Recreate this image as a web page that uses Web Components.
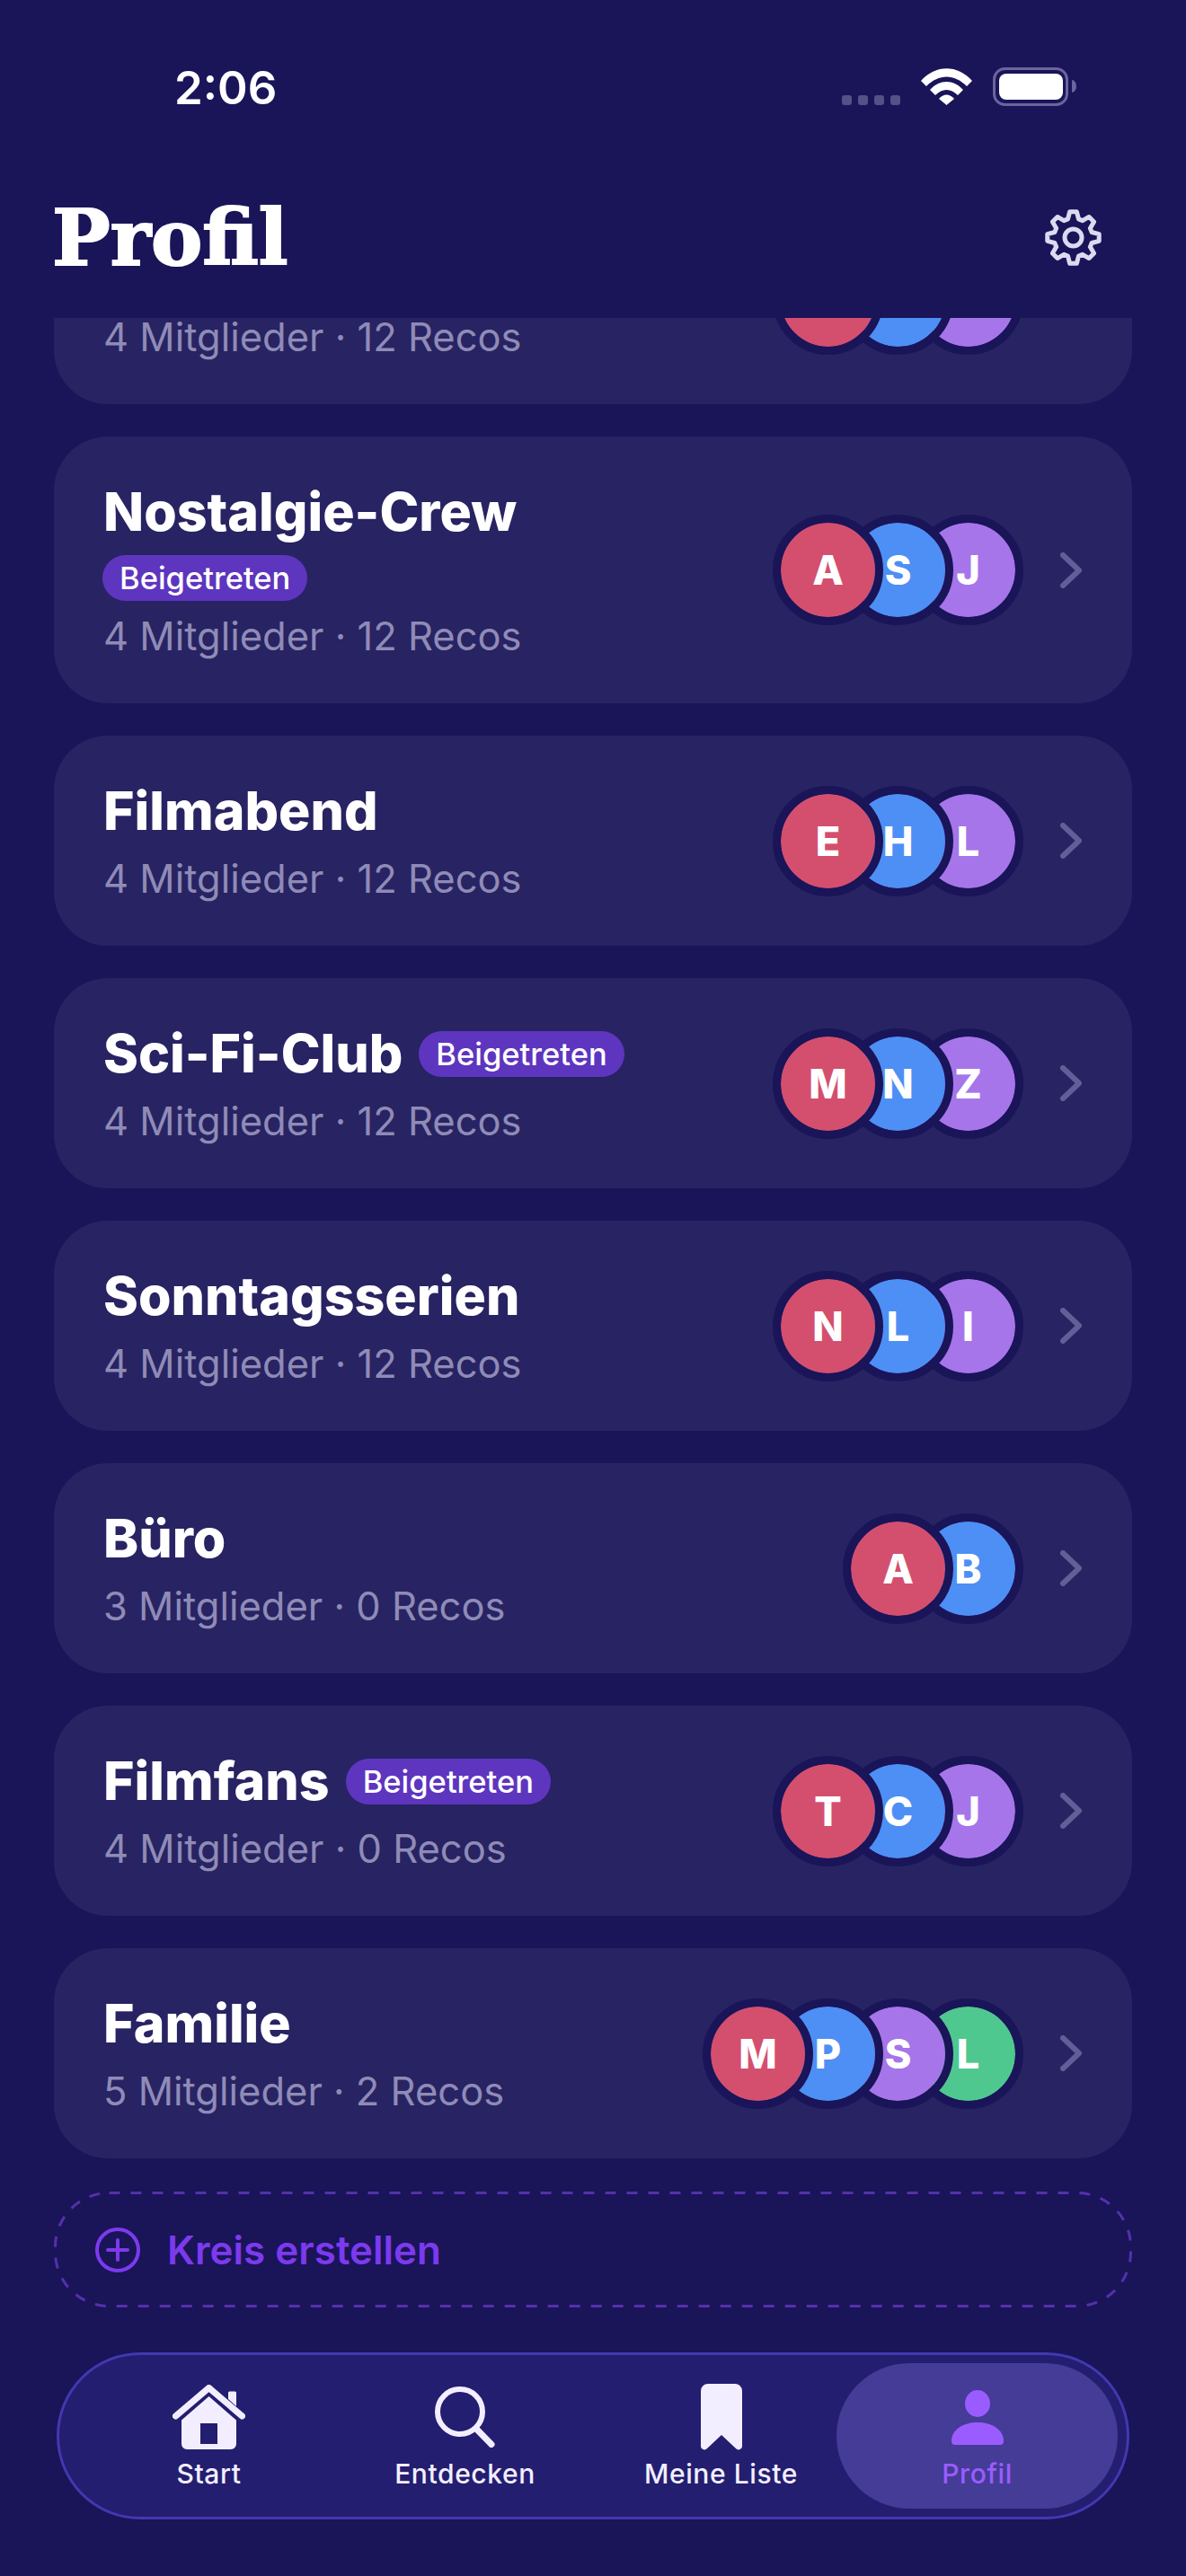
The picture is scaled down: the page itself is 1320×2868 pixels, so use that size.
<!doctype html>
<html lang="de"><head><meta charset="utf-8"><title>Profil</title>
<style>
html,body{margin:0;padding:0;background:#1a1459;}
body{font-family:Inter,"Liberation Sans",sans-serif;width:1320px;height:2868px;overflow:hidden;}
</style></head><body>
<app-screen>
  <status-bar slot="top" time="2:06"></status-bar>
  <page-header slot="top" title="Profil"></page-header>
  <circle-card sub="4 Mitglieder · 12 Recos" initials="   " clipped></circle-card>
  <circle-card name="Nostalgie-Crew" sub="4 Mitglieder · 12 Recos" initials="ASJ" badge="below"></circle-card>
  <circle-card name="Filmabend" sub="4 Mitglieder · 12 Recos" initials="EHL"></circle-card>
  <circle-card name="Sci-Fi-Club" sub="4 Mitglieder · 12 Recos" initials="MNZ" badge="inline"></circle-card>
  <circle-card name="Sonntagsserien" sub="4 Mitglieder · 12 Recos" initials="NLI"></circle-card>
  <circle-card name="Büro" sub="3 Mitglieder · 0 Recos" initials="AB"></circle-card>
  <circle-card name="Filmfans" sub="4 Mitglieder · 0 Recos" initials="TCJ" badge="inline"></circle-card>
  <circle-card name="Familie" sub="5 Mitglieder · 2 Recos" initials="MPSL"></circle-card>
  <create-button slot="after">Kreis erstellen</create-button>
  <bottom-nav slot="after">
    <nav-item label="Start" icon="home"></nav-item>
    <nav-item label="Entdecken" icon="search"></nav-item>
    <nav-item label="Meine Liste" icon="bookmark"></nav-item>
    <nav-item label="Profil" icon="person" active></nav-item>
  </bottom-nav>
</app-screen>
<script>
const FONT='Inter,"Liberation Sans",sans-serif';
function gearPath(cx,cy,teeth,ro,ri){
  let d='';const step=Math.PI*2/teeth;
  for(let i=0;i<teeth;i++){
    const a=-Math.PI/2+i*step;
    const pts=[[a-step*.36,ri],[a-step*.17,ro],[a+step*.17,ro],[a+step*.36,ri]];
    pts.forEach((p,j)=>{
      const x=(cx+Math.cos(p[0])*p[1]).toFixed(2),y=(cy+Math.sin(p[0])*p[1]).toFixed(2);
      d+=(i===0&&j===0?'M':'L')+x+' '+y+' ';
    });
  }
  return d+'Z';
}
class AppScreen extends HTMLElement{constructor(){super();this.attachShadow({mode:'open'}).innerHTML=`
<style>
:host{display:flex;flex-direction:column;width:1320px;height:2868px;background:#1a1459;color:#fff;font-family:${FONT};}
.top{flex:none;height:354px;display:block;}
.scroll{flex:none;height:2086px;overflow:hidden;padding:0 60px;}
.list{display:flex;flex-direction:column;gap:36px;margin-top:-138px;}
.after{display:flex;flex-direction:column;}
</style>
<div class="top"><slot name="top"></slot></div>
<div class="scroll"><div class="list"><slot></slot></div></div>
<div class="after"><slot name="after"></slot></div>`;}}
customElements.define('app-screen',AppScreen);

class StatusBar extends HTMLElement{connectedCallback(){if(this.shadowRoot)return;this.attachShadow({mode:'open'}).innerHTML=`
<style>
:host{display:flex;align-items:flex-end;height:124px;box-sizing:border-box;padding:0 122px 0 194px;}
.time{font:600 51px/52px ${FONT};color:#fff;}
.right{margin-left:auto;display:flex;align-items:flex-end;gap:23px;padding-bottom:6px;}
.dots{display:flex;gap:7px;margin-bottom:1px;}
.dots i{display:block;width:11px;height:11px;border-radius:3px;background:#565088;}
svg{display:block;}
</style>
<div class="time">${this.getAttribute('time')}</div>
<div class="right">
<div class="dots"><i></i><i></i><i></i><i></i></div>
<svg width="57" height="41" viewBox="0 0 57 41" style="margin-bottom:1px"><path fill="#fff" d="M0 14 C16 -4.5 41 -4.5 57 14 L51 20 C37 6 20 6 6 20Z M10 24 C21 12 36 12 47 24 L41 30 C33 22 24 22 16 30Z M20 34 C25 28 32 28 37 34 L28.5 41Z"/></svg>
<svg width="93" height="43" viewBox="0 0 93 43"><rect x="1.5" y="1.5" width="81" height="40" rx="12" fill="none" stroke="#6a659c" stroke-width="3"/><rect x="7" y="7" width="71" height="29" rx="8" fill="#fff"/><path d="M88 14 a5 7 0 0 1 0 14Z" fill="#6a659c"/></svg>
</div>`;}}
customElements.define('status-bar',StatusBar);

class PageHeader extends HTMLElement{connectedCallback(){if(this.shadowRoot)return;this.attachShadow({mode:'open'}).innerHTML=`
<style>
:host{display:flex;justify-content:space-between;align-items:flex-start;height:230px;box-sizing:border-box;padding:0 94px 0 58px;}
h1{margin:91px 0 0;font:700 86px/100px "DejaVu Serif","Liberation Serif",serif;color:#fff;-webkit-text-stroke:2px #fff;}
svg{display:block;margin-top:109px;}
</style>
<h1>${this.getAttribute('title')}</h1>
<svg width="63" height="63" viewBox="0 0 63 63"><path d="${gearPath(31.5,31.5,8,29,21.5)}" fill="none" stroke="#dcdaf0" stroke-width="5" stroke-linejoin="round"/><circle cx="31.5" cy="31.5" r="9.5" fill="none" stroke="#dcdaf0" stroke-width="5"/></svg>`;}}
customElements.define('page-header',PageHeader);

class AvatarStack extends HTMLElement{connectedCallback(){if(this.shadowRoot)return;
const cols=['#d44f6e','#4d8ff5','#a675ea','#4fc88f'];
const s=[...this.getAttribute('initials')];
this.attachShadow({mode:'open'}).innerHTML=`
<style>
:host{display:flex;flex:none;}
.a{box-sizing:border-box;width:123px;height:123px;border-radius:50%;border:9px solid #1a1459;display:flex;align-items:center;justify-content:center;font:800 45px/1 ${FONT};color:#fff;position:relative;background-clip:padding-box;}
.a+.a{margin-left:-45px;}
</style>
${s.map((c,i)=>`<div class="a" style="background-color:${cols[i]};z-index:${9-i}">${c.trim()}</div>`).join('')}`;}}
customElements.define('avatar-stack',AvatarStack);

class CircleCard extends HTMLElement{connectedCallback(){if(this.shadowRoot)return;
const name=this.getAttribute('name')||'',sub=this.getAttribute('sub'),ini=this.getAttribute('initials'),badge=this.getAttribute('badge');
const b=`<span class="badge">Beigetreten</span>`;
this.attachShadow({mode:'open'}).innerHTML=`
<style>
:host{display:flex;align-items:center;box-sizing:border-box;min-height:234px;background:#282362;border-radius:60px;padding:48px 56px 48px 55px;flex:none;}
.t{flex:1;min-width:0;}
.row{display:flex;align-items:center;gap:18px;height:72px;}
.name{font:800 59px/72px ${FONT};color:#fff;white-space:nowrap;}
.badge{display:inline-flex;align-items:center;height:51px;box-sizing:border-box;padding:0 19px;border-radius:26px;background:#5e35bf;color:#fff;font:500 34.5px/51px ${FONT};white-space:nowrap;}
.below{display:flex;margin-top:12px;margin-left:-1px;}
.sub{margin-top:12px;font:400 43.5px/54px ${FONT};color:#8f8bb7;white-space:nowrap;}
svg{display:block;flex:none;margin-left:41px;}
</style>
<div class="t">
<div class="row"><span class="name">${name}</span>${badge==='inline'?b:''}</div>
${badge==='below'?`<div class="below">${b}</div>`:''}
<div class="sub">${sub}</div>
</div>
<avatar-stack initials="${ini}"></avatar-stack>
<svg width="24" height="40" viewBox="0 0 24 40"><path d="M3 3 L21 20 L3 37" fill="none" stroke="#635e98" stroke-width="6" stroke-linecap="round" stroke-linejoin="round"/></svg>`;}}
customElements.define('circle-card',CircleCard);

class CreateButton extends HTMLElement{constructor(){super();this.attachShadow({mode:'open'}).innerHTML=`
<style>
:host{display:flex;align-items:center;gap:30px;position:relative;box-sizing:border-box;width:1200px;height:129px;margin:0 60px;padding-left:46px;color:#7c3aed;font:600 44px/1 ${FONT};}
.dash{position:absolute;left:0;top:0;}
svg{display:block;flex:none;}
</style>
<svg class="dash" width="1200" height="129" viewBox="0 0 1200 129"><rect x="1.5" y="1.5" width="1197" height="126" rx="60" fill="none" stroke="#5431ab" stroke-width="3" stroke-dasharray="12 12"/></svg>
<svg width="50" height="50" viewBox="0 0 50 50"><circle cx="25" cy="25" r="23" fill="none" stroke="#7c3aed" stroke-width="4"/><path d="M14 25H36M25 14V36" stroke="#7c3aed" stroke-width="4" stroke-linecap="round"/></svg>
<slot></slot>`;}}
customElements.define('create-button',CreateButton);

class BottomNav extends HTMLElement{constructor(){super();this.attachShadow({mode:'open'}).innerHTML=`
<style>
:host{display:grid;grid-template-columns:repeat(4,285px);box-sizing:border-box;width:1194px;height:186px;margin:50px 63px 0;padding:9px 0 9px 24px;border:3px solid #4338b0;border-radius:93px;background:#231e70;}
</style><slot></slot>`;}}
customElements.define('bottom-nav',BottomNav);

const ICONS={
home:`<svg width="81" height="72" viewBox="0 0 81 72"><path d="M3.5 35 L40.5 3.5 L77.5 35" fill="none" stroke="#f3eeff" stroke-width="7" stroke-linecap="round" stroke-linejoin="round"/><path d="M62 16V9a1.5 1.5 0 0 1 1.5-1.5H69.5a1.5 1.5 0 0 1 1.5 1.5V24Z" fill="#f3eeff"/><path fill-rule="evenodd" fill="#f3eeff" d="M10 39.5 L40.5 13 L71 39.5 V66 a6 6 0 0 1 -6 6 H16 a6 6 0 0 1 -6 -6Z M31 43 V66 H50 V43Z"/></svg>`,
search:`<svg width="67" height="68" viewBox="0 0 67 68"><circle cx="28" cy="28" r="25" fill="none" stroke="#f3eeff" stroke-width="6"/><path d="M46 47 L63 64.5" stroke="#f3eeff" stroke-width="7" stroke-linecap="round"/></svg>`,
bookmark:`<svg width="46" height="74" viewBox="0 0 46 74"><path fill="#f3eeff" d="M8 0 H38 a8 8 0 0 1 8 8 V69 a4 4 0 0 1 -7 3 L23 57 L7 72 a4 4 0 0 1 -7 -3 V8 a8 8 0 0 1 8 -8Z"/></svg>`,
person:`<svg width="58" height="61" viewBox="0 0 58 61"><ellipse cx="29" cy="15" rx="14" ry="15" fill="#9b5cff"/><path fill="#9b5cff" d="M0 57 C0 44 13 36 29 36 S58 44 58 57 a4 4 0 0 1 -4 4 H4 a4 4 0 0 1 -4 -4Z"/></svg>`};
class NavItem extends HTMLElement{connectedCallback(){if(this.shadowRoot)return;
const act=this.hasAttribute('active');
this.attachShadow({mode:'open'}).innerHTML=`
<style>
:host{display:flex;flex-direction:column;align-items:center;box-sizing:border-box;height:162px;padding-top:23px;border-radius:81px;color:${act?'#9b5cff':'#f3eeff'};${act?'background:#443c96;margin:0 -14px;':''}}
.i{height:74px;display:flex;align-items:center;justify-content:center;}
svg{display:block;}
.l{margin-top:8px;font:500 30px/36px ${FONT};letter-spacing:.6px;white-space:nowrap;}
</style>
<div class="i">${ICONS[this.getAttribute('icon')]}</div>
<div class="l">${this.getAttribute('label')}</div>`;}}
customElements.define('nav-item',NavItem);
</script>
</body></html>
